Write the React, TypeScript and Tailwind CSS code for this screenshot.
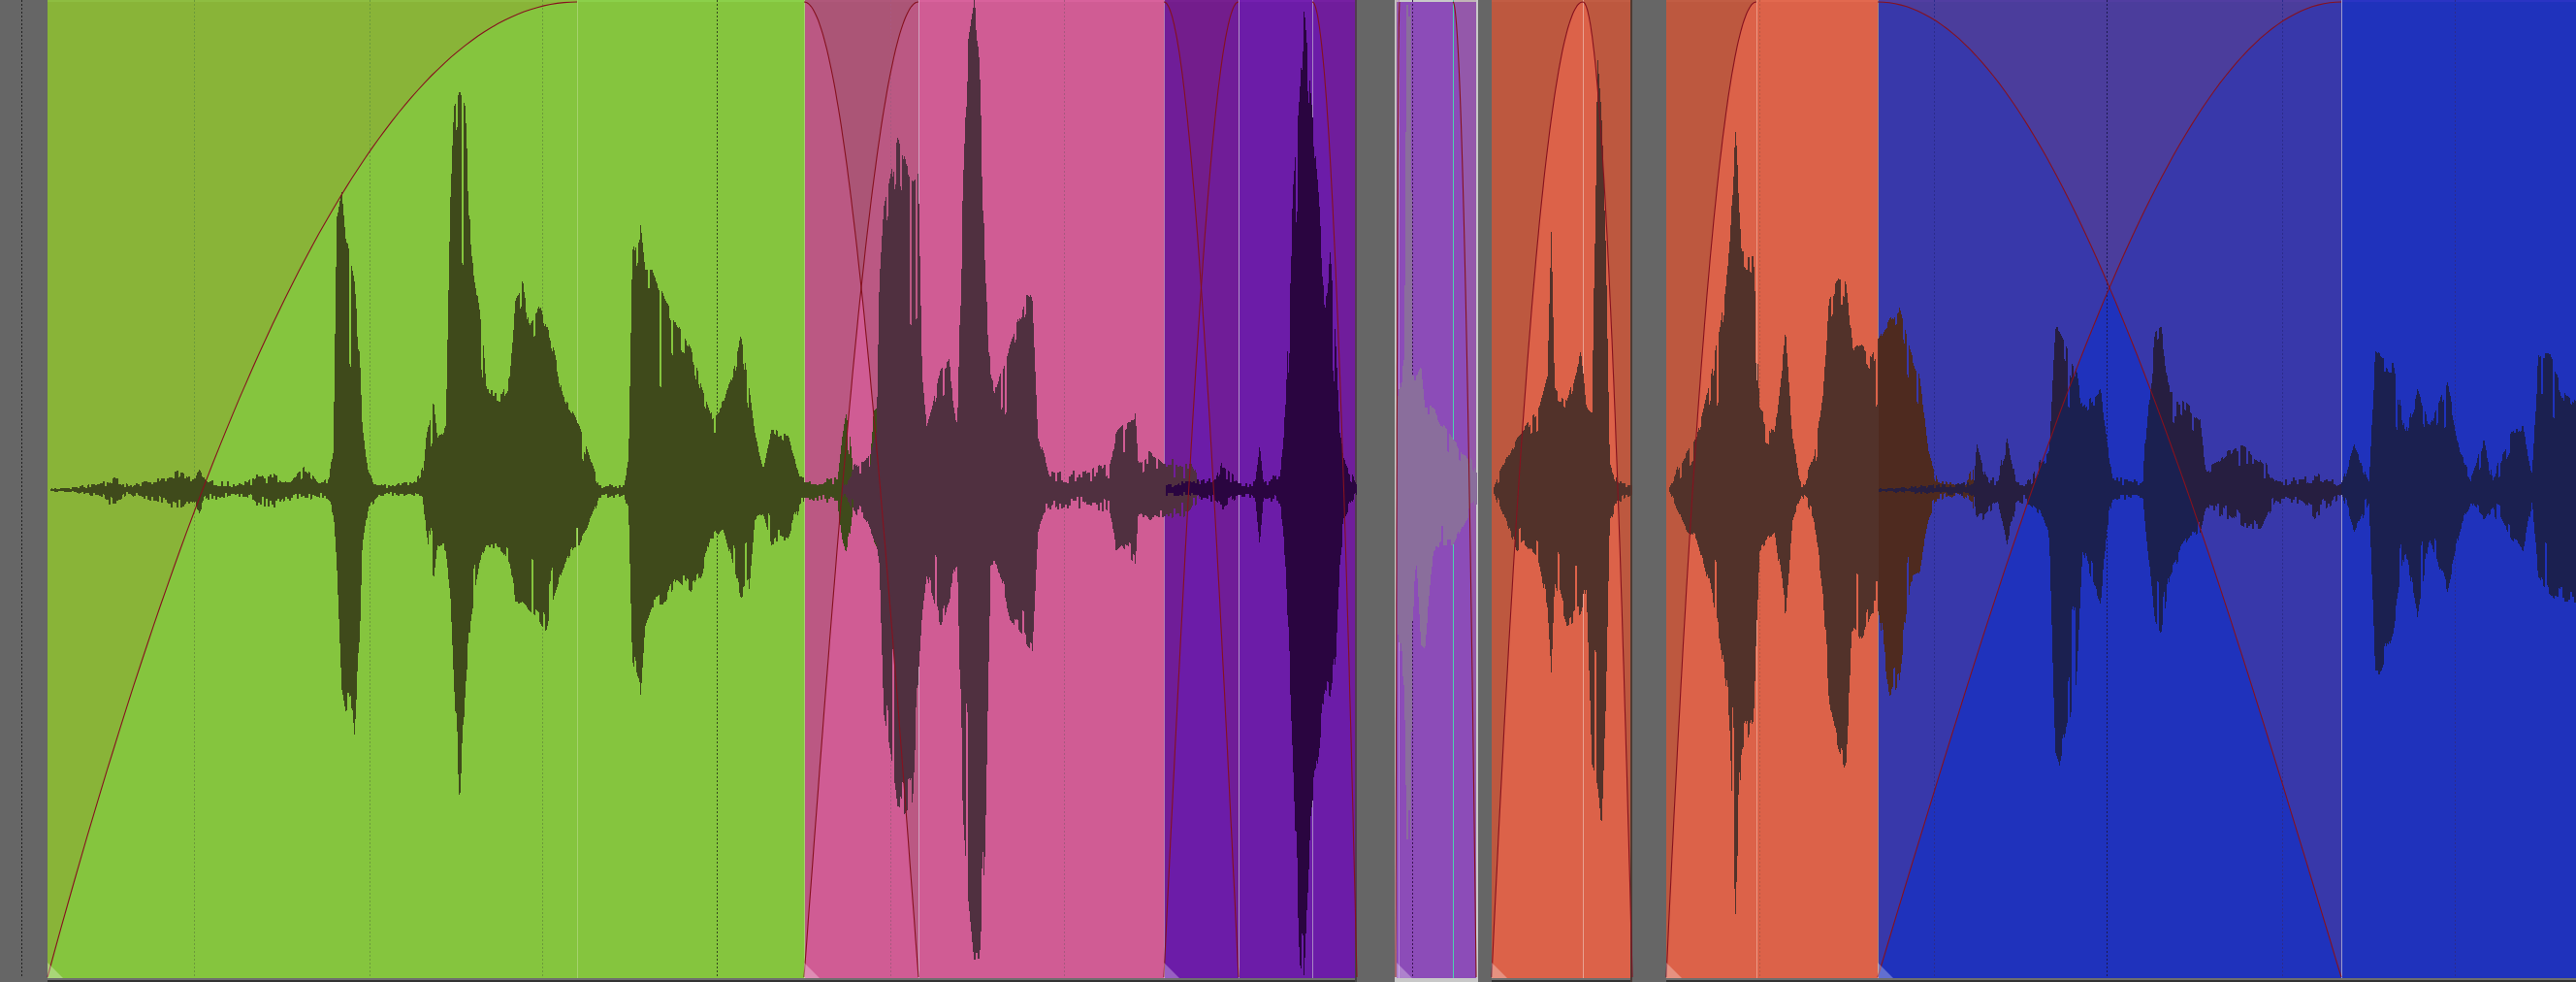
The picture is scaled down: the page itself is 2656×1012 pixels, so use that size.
import React from 'react';

// audio editor track: clips laid out in a row, waveforms and fades drawn over them
type Point = [number, number, number];

const CENTER = 505;
const TOP = 2;
const BOTTOM = 1007;

// envelopes were read off zoomed crops, so convert crop units to page pixels
const toEnv = (pts: Point[], sx: number, ox: number): Point[] =>
  pts.map(([x, t, b]) => [ox + x / sx, CENTER - t / 1.549, b / 1.549 - CENTER]);

const buildWave = (env: Point[], seed: number) => {
  let s = seed;
  const rnd = () => {
    s = (s * 1664525 + 1013904223) % 4294967296;
    return s / 4294967296;
  };
  // small signal is rough, big signal holds its envelope with deep narrow gaps
  const factor = (amp: number) => {
    if (amp < 26) return 0.45 + 0.85 * rnd();
    const f = 0.88 + 0.14 * rnd();
    return rnd() < 0.16 ? f * (0.55 + 0.3 * rnd()) : f;
  };
  let d = '';
  let i = 0;
  let ft = 1;
  let fb = 1;
  for (let x = Math.ceil(env[0][0]); x < env[env.length - 1][0]; x++) {
    while (i < env.length - 2 && env[i + 1][0] < x) i++;
    const [x0, t0, b0] = env[i];
    const [x1, t1, b1] = env[i + 1];
    const k = Math.min(1, Math.max(0, (x - x0) / (x1 - x0 || 1)));
    const at = t0 + (t1 - t0) * k;
    const ab = b0 + (b1 - b0) * k;
    if (x % 2 === 0) {
      ft = factor(at);
      fb = factor(ab);
      // keep the measured peaks
      if (x - x0 < 2 || x1 - x < 2) {
        ft = Math.max(ft, 1);
        fb = Math.max(fb, 1);
      }
    }
    const top = Math.round(CENTER - Math.max(1, at * ft));
    const bot = Math.round(CENTER + Math.max(1, ab * fb));
    d += `M${x + 0.5} ${top}V${bot}`;
  }
  return d;
};

const greenPts: Point[] = [
  [90, 780, 784], [135, 778, 786], [180, 772, 792], [205, 762, 805], [230, 776, 788], [265, 770, 798],
  [300, 764, 803], [325, 754, 810], [350, 765, 800], [357, 750, 820], [370, 770, 795], [440, 772, 792],
  [460, 760, 802], [490, 762, 805], [520, 770, 795], [548, 752, 795], [570, 772, 792], [590, 765, 795],
  [598, 720, 815], [604, 350, 900], [613, 305, 1100], [620, 380, 1135], [632, 430, 1130], [636, 450, 1175],
  [646, 580, 1000], [650, 680, 870], [660, 750, 810], [670, 772, 800], [680, 775, 790], [740, 772, 790],
  [760, 750, 800], [765, 695, 850], [778, 640, 925], [785, 700, 870], [800, 680, 880], [808, 320, 950],
  [815, 170, 1100], [825, 145, 1278], [835, 170, 1100], [845, 400, 990], [860, 490, 900], [868, 560, 880],
  [873, 620, 870], [900, 630, 880], [915, 600, 900], [925, 480, 960], [938, 450, 960], [950, 520, 975],
  [970, 490, 995], [980, 520, 1008], [995, 560, 950], [1010, 630, 910], [1030, 660, 875], [1040, 680, 870],
  [1055, 720, 840], [1065, 745, 815], [1075, 775, 795], [1120, 775, 790], [1128, 740, 810], [1135, 400, 1055],
  [1150, 358, 1110], [1158, 430, 1000], [1170, 430, 970], [1195, 480, 960], [1215, 520, 925], [1240, 555, 945],
  [1260, 620, 920], [1275, 660, 860], [1300, 640, 850], [1330, 535, 955], [1345, 620, 940], [1355, 690, 830],
  [1370, 750, 820], [1385, 685, 870], [1415, 695, 860], [1435, 760, 805], [1444, 762, 800],
];
const greenTail: Point[] = [
  [50, 770, 795], [110, 765, 800], [118, 700, 860], [125, 660, 882], [133, 700, 850], [140, 775, 790], [165, 770, 800], [175, 655, 865], [185, 650, 880],
];
const pinkPts: Point[] = [
  [118, 775, 790], [140, 745, 815], [160, 735, 830], [180, 690, 870], [185, 450, 900], [193, 330, 1140],
  [205, 280, 1200], [218, 218, 1285], [230, 260, 1300], [245, 290, 1280], [255, 280, 1080], [262, 600, 980],
  [270, 680, 920], [280, 650, 950], [295, 590, 1000], [310, 575, 960], [325, 680, 900], [335, 300, 1300],
  [345, 60, 1440], [355, 5, 1532], [365, 100, 1530], [375, 430, 1360], [385, 600, 900], [395, 620, 900],
  [420, 550, 990], [450, 470, 1030], [460, 480, 1040], [470, 700, 850], [480, 720, 820], [490, 760, 810],
  [560, 755, 805], [600, 745, 815], [610, 690, 880], [620, 680, 870], [645, 660, 900], [650, 740, 820],
  [670, 720, 830], [695, 740, 825], [720, 745, 820], [745, 740, 810], [760, 770, 795],
];
const purplePts: Point[] = [
  [700, 775, 790], [740, 770, 790], [790, 765, 800], [802, 745, 808], [830, 772, 790], [860, 770, 795],
  [868, 710, 870], [875, 770, 795], [905, 760, 800], [915, 640, 910], [928, 300, 1220], [940, 150, 1540],
  [948, 12, 1558], [960, 150, 1300], [975, 320, 1200], [985, 500, 1100], [995, 400, 1110], [1005, 550, 1050],
  [1012, 690, 900], [1022, 740, 825], [1042, 775, 790],
];
const lavPts: Point[] = [
  [1115, 640, 1000], [1128, 570, 1100], [1132, 8, 1340], [1140, 8, 1340], [1142, 600, 1000], [1150, 600, 900],
  [1158, 585, 1030], [1165, 650, 1035], [1180, 650, 880], [1200, 680, 870], [1215, 700, 870], [1240, 730, 830], [1258, 760, 800],
];
const orange1Pts: Point[] = [
  [1288, 780, 785], [1300, 750, 810], [1330, 700, 880], [1345, 680, 870], [1370, 650, 900], [1385, 600, 970],
  [1392, 365, 1075], [1398, 620, 930], [1420, 640, 1000], [1445, 560, 980], [1455, 650, 940], [1465, 660, 1220],
  [1475, 90, 1250], [1482, 180, 1322], [1490, 400, 1120], [1497, 740, 830], [1510, 770, 800], [1538, 775, 790],
];
const orange2Pts: Point[] = [
  [65, 780, 783], [95, 720, 850], [110, 700, 860], [125, 640, 910], [150, 520, 1030], [165, 400, 1150],
  [175, 208, 1452], [185, 400, 1200], [205, 410, 1150], [215, 650, 880], [240, 690, 850], [258, 530, 985],
  [270, 700, 830], [285, 780, 790], [305, 730, 830], [320, 630, 950], [330, 480, 1120], [345, 445, 1195],
  [358, 450, 1225], [370, 560, 1000], [385, 550, 1020], [400, 570, 980], [412, 540, 975],
];
const orangeTailPts: Point[] = [
  [412, 540, 975], [430, 510, 1112], [447, 490, 1085], [465, 560, 930], [480, 600, 915], [495, 720, 830], [510, 770, 795], [550, 775, 790], [570, 750, 810],
];
const bluePts: Point[] = [
  [412, 780, 785], [450, 778, 786], [570, 772, 790], [575, 710, 825], [590, 760, 820], [610, 770, 800],
  [625, 700, 870], [640, 770, 800], [660, 770, 800], [680, 740, 815], [695, 720, 860], [705, 525, 1200],
  [712, 530, 1222], [740, 590, 1090], [750, 650, 880], [780, 620, 965], [790, 700, 850], [800, 765, 795],
  [850, 770, 795], [855, 700, 850], [870, 530, 990], [880, 522, 1012], [895, 625, 920], [925, 645, 860],
  [945, 670, 850], [955, 755, 810], [990, 720, 820], [1015, 710, 840], [1045, 735, 845], [1070, 770, 800],
  [1115, 765, 800], [1135, 760, 820], [1180, 770, 790], [1200, 710, 850], [1225, 770, 800], [1235, 560, 1070],
  [1245, 570, 1072], [1265, 580, 1010], [1285, 690, 880], [1305, 620, 985], [1325, 680, 860], [1355, 610, 945],
  [1375, 720, 850], [1395, 760, 800], [1415, 700, 830], [1430, 770, 810], [1460, 690, 860], [1480, 680, 880],
  [1495, 760, 800], [1505, 570, 920], [1525, 565, 950], [1550, 630, 960], [1568, 640, 960],
];

const S1 = 1.742;
const S3 = 1.607;

const waves = [
  { d: buildWave(toEnv(greenPts, S1, 0), 11), color: '#3f4a1b' },
  { d: buildWave(toEnv(greenTail, S1, 800), 23), color: '#3f4a1b' },
  { d: buildWave(toEnv(pinkPts, S1, 800), 37), color: '#503040' },
  { d: buildWave(toEnv(purplePts, S1, 800), 41), color: '#2a0540' },
  { d: buildWave(toEnv(lavPts, S1, 800), 53), color: '#8a6e9c' },
  { d: buildWave(toEnv(orange1Pts, S1, 800), 61), color: '#52322a' },
  { d: buildWave(toEnv(orange2Pts, S3, 1680), 71), color: '#52322a' },
  { d: buildWave(toEnv(orangeTailPts, S3, 1680), 83), color: '#4e2a1f' },
];
const blueWave = buildWave(toEnv(bluePts, S3, 1680), 97);

type Fade = { x0: number; x1: number; dir: 'in' | 'out'; shape: 'par' | 'sine'; fill: string };

const fades: Fade[] = [
  { x0: 49, x1: 595, dir: 'in', shape: 'par', fill: '#968426' },
  { x0: 829, x1: 947, dir: 'out', shape: 'sine', fill: '#7d4b50' },
  { x0: 829, x1: 947, dir: 'in', shape: 'sine', fill: '#7d4b50' },
  { x0: 1200, x1: 1277, dir: 'out', shape: 'sine', fill: '#7c2068' },
  { x0: 1200, x1: 1277, dir: 'in', shape: 'sine', fill: '#7c2068' },
  { x0: 1353, x1: 1399, dir: 'out', shape: 'par', fill: '#7c2078' },
  { x0: 1439, x1: 1443, dir: 'in', shape: 'par', fill: '#ac7c80' },
  { x0: 1498, x1: 1522, dir: 'out', shape: 'par', fill: '#ac7c80' },
  { x0: 1538, x1: 1632, dir: 'in', shape: 'par', fill: '#603a25' },
  { x0: 1632, x1: 1683, dir: 'out', shape: 'par', fill: '#603a25' },
  { x0: 1718, x1: 1811, dir: 'in', shape: 'par', fill: '#603a25' },
  { x0: 1936, x1: 2414, dir: 'out', shape: 'sine', fill: '#834a74' },
  { x0: 1936, x1: 2414, dir: 'in', shape: 'sine', fill: '#834a74' },
];

const fadePoints = ({ x0, x1, dir, shape }: Fade) => {
  const pts: string[] = [];
  for (let n = 0; n <= 80; n++) {
    const t = n / 80;
    const u = dir === 'in' ? t : 1 - t;
    const f = shape === 'par' ? 1 - (1 - u) * (1 - u) : Math.sin((u * Math.PI) / 2);
    pts.push(`${(x0 + (x1 - x0) * t).toFixed(1)},${(BOTTOM - f * (BOTTOM - TOP)).toFixed(1)}`);
  }
  return pts;
};

// thin guides: fade ends, stretch markers, grid
const guides: { x: number; color: string; dash?: boolean }[] = [
  { x: 22, color: '#222222', dash: true },
  { x: 200, color: '#6c9a3a', dash: true },
  { x: 381, color: '#6c9a3a', dash: true },
  { x: 559, color: '#6c9a3a', dash: true },
  { x: 595, color: '#a4d26c' },
  { x: 739, color: '#33461c', dash: true },
  { x: 829, color: '#a9cc75' },
  { x: 918, color: '#a8587f', dash: true },
  { x: 947, color: '#d2a6c0' },
  { x: 1097, color: '#a8587f', dash: true },
  { x: 1200, color: '#b27cb4' },
  { x: 1277, color: '#b296c8' },
  { x: 1353, color: '#a886c4' },
  { x: 1442, color: '#b488d4' },
  { x: 1456, color: '#3c1454', dash: true },
  { x: 1498, color: '#4cd0b0' },
  { x: 1632, color: '#e8a292' },
  { x: 1811, color: '#ec9c88' },
  { x: 1814, color: '#b85a44', dash: true },
  { x: 1936, color: '#a8857a' },
  { x: 1994, color: '#2c2c8c', dash: true },
  { x: 2172, color: '#1c1a50', dash: true },
  { x: 2353, color: '#2c2c8c', dash: true },
  { x: 2414, color: '#9c9cd0' },
  { x: 2531, color: '#2c2c8c', dash: true },
];

const corners = [49, 829, 1200, 1440, 1538, 1718, 1936];

const Clip: React.FC<{ className: string; edge: string }> = ({ className, edge }) => (
  <div className={`flex flex-col ${className}`}>
    <div className={`h-[2px] ${edge}`}></div>
    <div className="flex-1"></div>
    <div className="h-[2px] bg-[#6e6e6e]"></div>
    <div className="h-[2px] bg-[#333333]"></div>
  </div>
);

const bluePoly = fades[fades.length - 1];
const orangeOut = fades[fades.length - 2];

export default function App() {
  return (
    <div className="relative flex h-[1012px] w-[2656px] overflow-hidden bg-[#666666]">
      <div className="w-[49px]"></div>
      <Clip className="w-[780px] bg-[#85c53e]" edge="bg-[#8bd04a]" />
      <Clip className="w-[371px] bg-[#d05c94]" edge="bg-[#d8629c]" />
      <Clip className="w-[199px] bg-[#6c1ca8] border-r-2 border-[#444444]" edge="bg-[#7420b0]" />
      <div className="w-[39px]"></div>
      <div className="flex h-full w-[86px] flex-col border-x-2 border-t-2 border-[#c8c8c8] bg-[#8c4cb8]">
        <div className="flex-1"></div>
        <div className="-mx-[2px] h-[4px] bg-[#c8c8c8]"></div>
      </div>
      <div className="w-[14px]"></div>
      <Clip className="w-[145px] bg-[#dc6249] border-r-2 border-[#4a3a36]" edge="bg-[#e2694f]" />
      <div className="w-[35px]"></div>
      <Clip className="w-[218px] bg-[#dc6249]" edge="bg-[#e2694f]" />
      <Clip className="flex-1 bg-[#1f32bc]" edge="bg-[#2a34c4]" />

      <svg className="absolute inset-0" width={2656} height={1012} viewBox="0 0 2656 1012">
        <defs>
          <clipPath id="blue-shade">
            <polygon points={[...fadePoints(bluePoly), `${bluePoly.x1},0`, `${bluePoly.x0},0`].join(' ')} />
            <polygon points={[...fadePoints(orangeOut), `${orangeOut.x1},0`, `${orangeOut.x0},0`].join(' ')} />
          </clipPath>
        </defs>
        {fades.map((f, i) => (
          <polygon
            key={i}
            points={[...fadePoints(f), `${f.x1},0`, `${f.x0},0`].join(' ')}
            fill={f.fill}
            fillOpacity={0.25}
          />
        ))}
        {guides.map(g => (
          <line
            key={g.x}
            x1={g.x + 0.5}
            x2={g.x + 0.5}
            y1={0}
            y2={1008}
            stroke={g.color}
            strokeWidth={1}
            strokeDasharray={g.dash ? '2 2' : undefined}
            shapeRendering="crispEdges"
          />
        ))}
        {waves.map((w, i) => (
          <path key={i} d={w.d} stroke={w.color} strokeWidth={1} fill="none" shapeRendering="crispEdges" />
        ))}
        <path d={blueWave} stroke="#1b2050" strokeWidth={1} fill="none" shapeRendering="crispEdges" />
        <path d={blueWave} stroke="#261e40" strokeWidth={1} fill="none" shapeRendering="crispEdges" clipPath="url(#blue-shade)" />
        {fades.map((f, i) => (
          <polyline key={i} points={fadePoints(f).join(' ')} fill="none" stroke="#86121f" strokeWidth={1.1} />
        ))}
        {corners.map(x => (
          <polygon
            key={x}
            points={`${x},${BOTTOM - 15} ${x + 16},${BOTTOM + 1} ${x},${BOTTOM + 1}`}
            fill="#ffffff"
            fillOpacity={0.3}
          />
        ))}
      </svg>
    </div>
  );
}
